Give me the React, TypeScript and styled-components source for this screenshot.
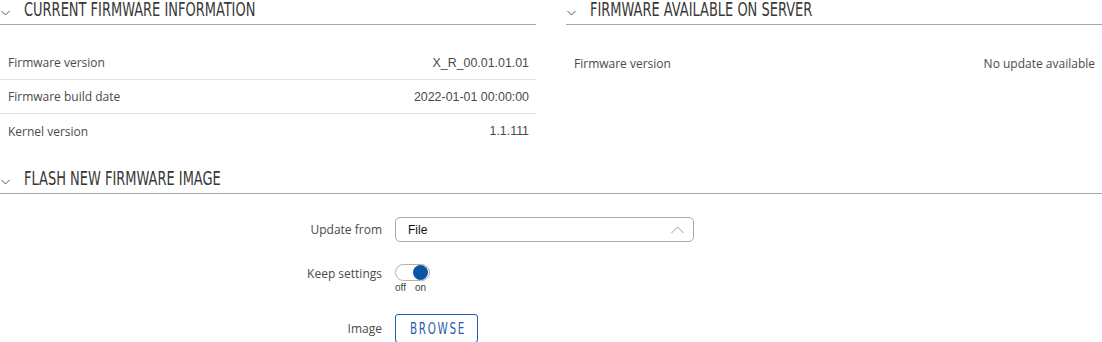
import React from "react";
import styled, { createGlobalStyle } from "styled-components";

const Global = createGlobalStyle`
  html, body { margin: 0; padding: 0; background: #fff; }
  body { font-family: "Open Sans", "Liberation Sans", sans-serif; color: #4a4a4a; }
  * { box-sizing: border-box; }
`;

const Page = styled.div`
  width: 1102px;
`;

const TopGrid = styled.div`
  display: grid;
  grid-template-columns: 536px 536px;
  column-gap: 30px;
`;

const Section = styled.section``;

const Heading = styled.div`
  height: 25px;
  border-bottom: 1px solid #a8a8a8;
  display: flex;
  align-items: flex-end;
  gap: 14px;
  padding-left: 1px;
`;

const HeadingText = styled.h2`
  margin: 0;
  display: inline-block;
  font-family: "DejaVu Sans Condensed", "Liberation Sans Narrow", sans-serif;
  font-weight: 400;
  font-size: 19px;
  line-height: 18px;
  padding-bottom: 6px;
  color: #383838;
  white-space: nowrap;
  transform: scaleX(0.76);
  transform-origin: left bottom;
`;

const ChevronBox = styled.span`
  display: flex;
  width: 9px;
  height: 18px;
  align-items: center;
  padding-bottom: 5px;
  color: #555;
`;

const Rows = styled.div`
  padding-top: 21px;
`;

const Row = styled.div<{ $last?: boolean }>`
  height: 34px;
  display: flex;
  align-items: center;
  justify-content: space-between;
  padding: 0 7px 0 8px;
  border-bottom: ${(p) => (p.$last ? "none" : "1px solid #e3e3e3")};
  font-size: 12px;
`;

const Label = styled.span`
  font-family: "Open Sans", sans-serif;
  font-size: 12px;
  color: #4a4a4a;
`;

const Value = styled.span<{ $arial?: boolean }>`
  font-family: ${(p) => (p.$arial ? '"Liberation Sans", Arial, sans-serif' : '"Open Sans", sans-serif')};
  font-size: ${(p) => (p.$arial ? "12.4px" : "12px")};
  color: #4a4a4a;
`;

const FlashSection = styled.section`
  margin-top: 21px;
`;

const Form = styled.div`
  padding-top: 23px;
  display: flex;
  flex-direction: column;
`;

const FormRow = styled.div<{ $mt?: number; $align?: string }>`
  display: grid;
  grid-template-columns: 382px 1fr;
  column-gap: 13px;
  align-items: ${(p) => p.$align || "center"};
  margin-top: ${(p) => p.$mt || 0}px;
`;

const FormLabel = styled.label<{ $pt?: number }>`
  text-align: right;
  font-family: "Open Sans", sans-serif;
  font-size: 12px;
  color: #4a4a4a;
  padding-top: ${(p) => p.$pt || 0}px;
`;

const Select = styled.div`
  width: 299px;
  height: 25px;
  border: 1px solid #a9a9a9;
  border-radius: 5px;
  display: flex;
  align-items: center;
  justify-content: space-between;
  padding: 0 9px 0 12px;
  font-family: "Liberation Sans", Arial, sans-serif;
  font-size: 12px;
  color: #111;
`;

const ToggleWrap = styled.div`
  display: flex;
  flex-direction: column;
  width: 36px;
`;

const Track = styled.div`
  width: 35px;
  height: 17px;
  border: 1px solid #b0b0b0;
  border-radius: 9px;
  display: flex;
  align-items: center;
  justify-content: flex-end;
  padding-right: 1px;
  background: #fff;
`;

const Knob = styled.div`
  width: 15px;
  height: 15px;
  border-radius: 50%;
  background: #0a56a6;
`;

const OnOff = styled.div`
  display: flex;
  gap: 9px;
  font-family: "Liberation Sans", Arial, sans-serif;
  font-size: 10px;
  color: #444;
  padding-left: 0;
  line-height: 11px;
  margin-top: 1px;
`;

const Button = styled.button`
  width: 83px;
  height: 29px;
  border: 1px solid #1f5ea8;
  border-radius: 3px;
  background: #fff;
  color: #1f5ea8;
  padding: 0;
  display: flex;
  align-items: center;
  justify-content: center;
  cursor: pointer;
`;

const ButtonText = styled.span`
  display: inline-block;
  font-family: "DejaVu Sans Condensed", "Liberation Sans Narrow", sans-serif;
  font-size: 16px;
  letter-spacing: 2.4px;
  margin-right: -2.4px;
  transform: scaleX(0.72);
  white-space: nowrap;
`;

const Chevron = ({ up }: { up?: boolean }) => (
  <svg width="9" height="6" viewBox="0 0 9 6" fill="none">
    <polyline
      points={up ? "0.5,5 4.5,1 8.5,5" : "0.5,1 4.5,5 8.5,1"}
      stroke="currentColor"
      strokeWidth="1"
    />
  </svg>
);

const SelectArrow = styled.span`
  display: flex;
  color: #9a9a9a;
  svg { width: 13px; height: 8px; }
`;

const SectionHeading = ({ title }: { title: string }) => (
  <Heading>
    <ChevronBox>
      <Chevron />
    </ChevronBox>
    <HeadingText>{title}</HeadingText>
  </Heading>
);

export default function App() {
  return (
    <Page>
      <Global />
      <TopGrid>
        <Section>
          <SectionHeading title="CURRENT FIRMWARE INFORMATION" />
          <Rows>
            <Row>
              <Label>Firmware version</Label>
              <Value $arial>X_R_00.01.01.01</Value>
            </Row>
            <Row>
              <Label>Firmware build date</Label>
              <Value $arial>2022-01-01 00:00:00</Value>
            </Row>
            <Row $last>
              <Label>Kernel version</Label>
              <Value $arial>1.1.111</Value>
            </Row>
          </Rows>
        </Section>
        <Section>
          <SectionHeading title="FIRMWARE AVAILABLE ON SERVER" />
          <Rows>
            <Row $last>
              <Label>Firmware version</Label>
              <Value>No update available</Value>
            </Row>
          </Rows>
        </Section>
      </TopGrid>
      <FlashSection>
        <SectionHeading title="FLASH NEW FIRMWARE IMAGE" />
        <Form>
          <FormRow>
            <FormLabel>Update from</FormLabel>
            <Select>
              <span>File</span>
              <SelectArrow>
                <svg viewBox="0 0 13 8" fill="none">
                  <polyline points="0.5,7 6.5,1 12.5,7" stroke="currentColor" strokeWidth="1" />
                </svg>
              </SelectArrow>
            </Select>
          </FormRow>
          <FormRow $mt={22} $align="start">
            <FormLabel $pt={1}>Keep settings</FormLabel>
            <ToggleWrap>
              <Track>
                <Knob />
              </Track>
              <OnOff>
                <span>off</span>
                <span>on</span>
              </OnOff>
            </ToggleWrap>
          </FormRow>
          <FormRow $mt={21}>
            <FormLabel>Image</FormLabel>
            <div>
              <Button>
                <ButtonText>BROWSE</ButtonText>
              </Button>
            </div>
          </FormRow>
        </Form>
      </FlashSection>
    </Page>
  );
}
